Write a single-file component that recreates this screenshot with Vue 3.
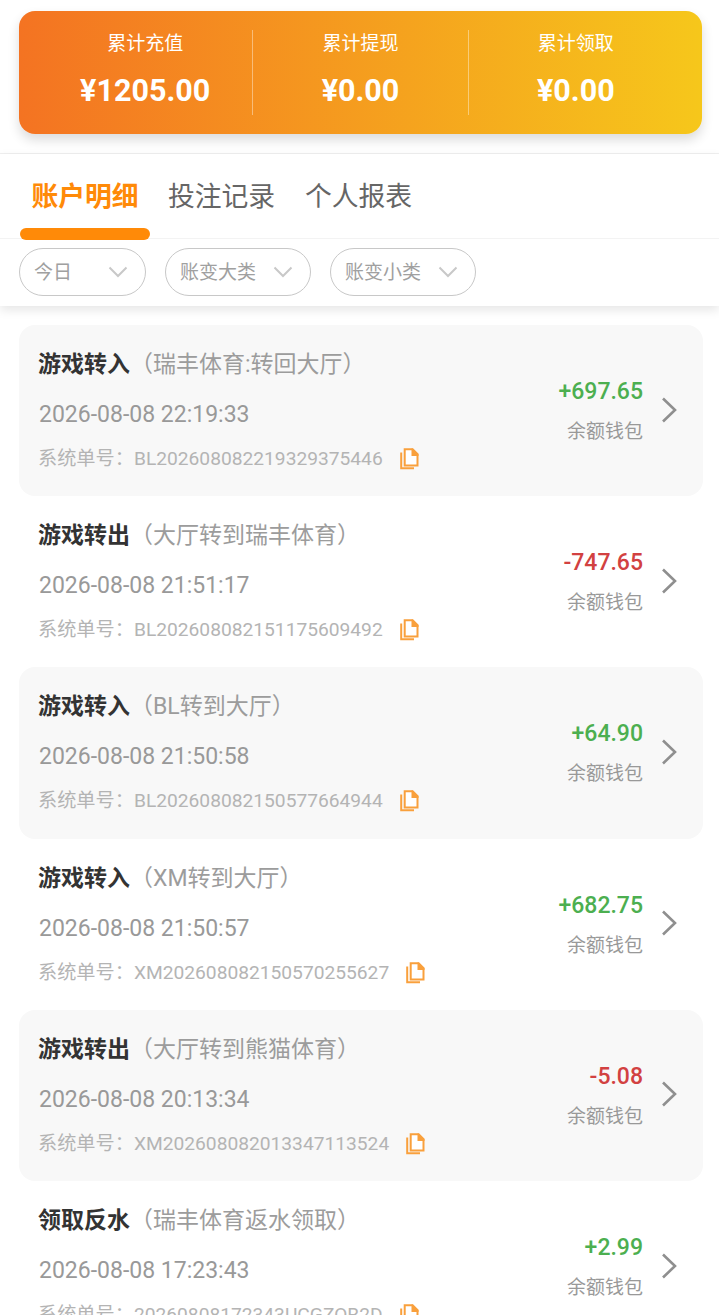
<script setup>
const stats = [
  { label: '累计充值', value: '¥1205.00' },
  { label: '累计提现', value: '¥0.00' },
  { label: '累计领取', value: '¥0.00' }
]
const tabs = ['账户明细', '投注记录', '个人报表']
const filters = [
  { label: '今日', cls: 'f1' },
  { label: '账变大类', cls: 'f2' },
  { label: '账变小类', cls: 'f2' }
]
const rows = [
  { t: '游戏转入', s: '（瑞丰体育:转回大厅）', d: '2026-08-08 22:19:33', o: 'BL202608082219329375446', a: '+697.65', up: true },
  { t: '游戏转出', s: '（大厅转到瑞丰体育）', d: '2026-08-08 21:51:17', o: 'BL202608082151175609492', a: '-747.65', up: false },
  { t: '游戏转入', s: '（BL转到大厅）', d: '2026-08-08 21:50:58', o: 'BL202608082150577664944', a: '+64.90', up: true },
  { t: '游戏转入', s: '（XM转到大厅）', d: '2026-08-08 21:50:57', o: 'XM202608082150570255627', a: '+682.75', up: true },
  { t: '游戏转出', s: '（大厅转到熊猫体育）', d: '2026-08-08 20:13:34', o: 'XM202608082013347113524', a: '-5.08', up: false },
  { t: '领取反水', s: '（瑞丰体育返水领取）', d: '2026-08-08 17:23:43', o: '20260808172343UCGZQB2D', a: '+2.99', up: true }
]
</script>

<template>
  <div class="page">
    <section class="summary">
      <div class="stats">
        <div v-for="s in stats" :key="s.label" class="stat">
          <div class="stat-label">{{ s.label }}</div>
          <div class="stat-value">{{ s.value }}</div>
        </div>
      </div>
    </section>
    <section class="head">
      <nav class="tabs">
        <div v-for="(t, i) in tabs" :key="t" class="tab" :class="{ active: i === 0 }">{{ t }}</div>
      </nav>
      <div class="filters">
        <div v-for="f in filters" :key="f.label" class="pill" :class="f.cls">
          <span class="pill-text">{{ f.label }}</span>
          <svg class="caret" width="20" height="12" viewBox="0 0 20 12"><path d="M1.5 1.5 10 10l8.500-8.500" fill="none" stroke="#c8c8c8" stroke-width="2"/></svg>
        </div>
      </div>
    </section>
    <section class="list">
      <article v-for="(r, i) in rows" :key="r.o" class="row" :class="{ odd: i % 2 === 0 }">
        <div class="main">
          <div class="title"><b>{{ r.t }}</b><span>{{ r.s }}</span></div>
          <div class="date">{{ r.d }}</div>
          <div class="order">
            <span class="order-label">系统单号：</span><span>{{ r.o }}</span>
            <svg class="copy" width="19" height="22" viewBox="0 0 19 22">
              <path d="M1.200 4.500v15.800h12.800" fill="none" stroke="#f9a03c" stroke-width="2"/>
              <path d="M4.700 1.200h7.800l5 5v11.300h-12.800z" fill="#fff" stroke="#f9a03c" stroke-width="2"/>
              <path d="M11.500.5h1.500l5.500 5.500v2h-7z" fill="#f9a03c"/>
            </svg>
          </div>
        </div>
        <div class="side">
          <div class="amount" :class="r.up ? 'up' : 'down'">{{ r.a }}</div>
          <div class="wallet">余额钱包</div>
        </div>
        <svg class="arrow" width="16" height="26" viewBox="0 0 16 26"><path d="M2 1.500 14 13 2 24.500" fill="none" stroke="#8f8f8f" stroke-width="2.600"/></svg>
      </article>
    </section>
  </div>
</template>

<style>
html, body { margin: 0; background: #fff; overflow: hidden; }
</style>

<style scoped>
.page {
  width: 719px;
  height: 1315px;
  overflow: hidden;
  background: #fff;
  font-family: Roboto, "Noto Sans CJK SC", sans-serif;
}
.summary {
  height: 154px;
  box-sizing: border-box;
  padding: 11px 17px 0 19px;
  border-bottom: 1px solid #f0f0f0;
}
.stats {
  height: 123px;
  box-sizing: border-box;
  padding: 0 19px;
  display: flex;
  align-items: center;
  border-radius: 16px;
  background: linear-gradient(90deg, #f47322, #f6c71b);
  box-shadow: 0 6px 12px rgba(0, 0, 0, .14);
  color: #fff;
}
.stat {
  flex: 1;
  height: 85px;
  text-align: center;
  border-left: 1px solid rgba(255, 255, 255, .4);
}
.stat:first-child { border-left: 0; }
.stat-label { font-size: 19px; line-height: 26px; margin-top: 1px; }
.stat-value { font-size: 30.5px; font-weight: 700; line-height: 36px; margin-top: 16px; }
.head {
  position: relative;
  z-index: 1;
  background: #fff;
  box-shadow: 0 4px 10px rgba(0, 0, 0, .1);
}
.tabs {
  height: 85px;
  box-sizing: border-box;
  display: flex;
  padding-left: 20px;
  gap: 2px;
  border-bottom: 1px solid #f3f3f3;
}
.tab {
  width: 135px;
  height: 85px;
  box-sizing: border-box;
  padding: 24px 0 0 0;
  text-align: center;
  font-size: 26.8px;
  line-height: 38px;
  color: #666;
}
.tab.active {
  width: 130px;
  margin-right: 2px;
  color: #ff8a08;
  font-weight: 700;
  position: relative;
}
.tab.active::after {
  content: "";
  position: absolute;
  left: 0;
  bottom: -1px;
  width: 130px;
  height: 12px;
  border-radius: 6px;
  background: #ff8a08;
}
.filters {
  height: 67px;
  box-sizing: border-box;
  display: flex;
  gap: 19px;
  padding: 9px 0 0 19px;
}
.pill {
  height: 48px;
  box-sizing: border-box;
  border: 1px solid #c8c8c8;
  border-radius: 24px;
  display: flex;
  align-items: center;
  justify-content: space-between;
  padding: 0 17px 0 14px;
  font-size: 19px;
  color: #a0a0a0;
}
.pill-text { margin-bottom: 4px; }
.pill.f1 { width: 127px; }
.pill.f2 { width: 146px; }
.list { padding: 19px 16px 0 19px; }
.row {
  height: 171.2px;
  box-sizing: border-box;
  display: flex;
  align-items: center;
  padding: 0 26px 0 20px;
  border-radius: 16px;
}
.row.odd { background: #f8f8f8; }
.main { flex: 1; min-width: 0; align-self: flex-start; padding-top: 23px; }
.title { font-size: 23px; line-height: 34px; color: #9c9c9c; white-space: nowrap; margin-left: -1px; }
.title b { color: #333; font-weight: 700; }
.date { font-size: 23px; line-height: 34px; color: #999; margin-top: 16px; }
.order {
  display: flex;
  align-items: center;
  font-size: 19.2px;
  line-height: 26px;
  color: #b4b4b4;
  margin-top: 14px;
  margin-left: -1px;
}
.copy { margin-left: 17px; }
.side { text-align: right; margin-right: 18px; margin-top: 2px; }
.amount { font-size: 23px; font-weight: 500; line-height: 30px; }
.up { color: #4caf50; }
.down { color: #d24141; }
.wallet { font-size: 19px; line-height: 28px; color: #999; margin-top: 11px; }
.arrow { flex: none; margin-top: -2px; }
</style>
